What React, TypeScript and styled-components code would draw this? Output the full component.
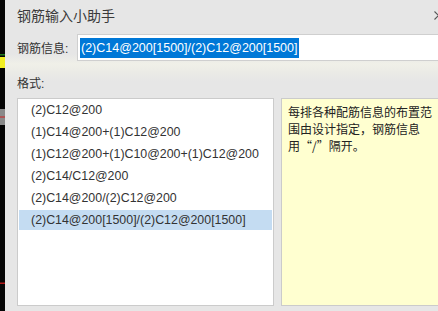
import React from "react";
import styled, { createGlobalStyle } from "styled-components";

const formats = [
  "(2)C12@200",
  "(1)C14@200+(1)C12@200",
  "(1)C12@200+(1)C10@200+(1)C12@200",
  "(2)C14/C12@200",
  "(2)C14@200/(2)C12@200",
  "(2)C14@200[1500]/(2)C12@200[1500]",
];

const GlobalStyle = createGlobalStyle`
  html, body {
    margin: 0;
    padding: 0;
    width: 438px;
    height: 311px;
    overflow: hidden;
    background: #000;
  }
  body {
    font-family: "Liberation Sans", "Noto Sans CJK SC", sans-serif;
  }
`;

const Screen = styled.div`
  display: flex;
  width: 438px;
  height: 311px;
  overflow: hidden;
`;

const Canvas = styled.div`
  flex: 0 0 5px;
  height: 311px;
  background: #050505;
  svg {
    display: block;
  }
`;

const Dialog = styled.div`
  flex: 0 0 450px;
  height: 311px;
  box-sizing: border-box;
  padding: 0 0 5px 12px;
  display: flex;
  flex-direction: column;
  background: linear-gradient(
    180deg,
    #e6e6e6 0px,
    #e6e6e6 54px,
    #f0f0e8 64px,
    #ebebe6 72px,
    #e6e6e6 82px,
    #e6e6e6 100%
  );
  color: #333;
`;

const TitleBar = styled.div`
  height: 30px;
  display: flex;
  align-items: center;
  justify-content: space-between;
  padding-right: 12px;
  font-size: 14px;
  color: #3a3a3a;
`;

const Close = styled.span`
  width: 9px;
  height: 9px;
  display: flex;
  svg {
    display: block;
  }
`;

const FieldRow = styled.div`
  margin-top: 4px;
  display: flex;
  align-items: center;
  height: 27px;
  font-size: 12px;
`;

const Label = styled.span`
  width: 60px;
  color: #333;
  font-size: 12px;
`;

const Input = styled.div`
  flex: 1;
  height: 27px;
  box-sizing: border-box;
  border: 1px solid #cfcfcf;
  background: #fff;
  display: flex;
  align-items: center;
  padding-left: 2px;
`;

const Selected = styled.span`
  background: #0078d7;
  color: #fff;
  font-size: 12.5px;
  line-height: 20px;
  padding: 0 1px;
`;

const Caption = styled.div`
  margin-top: 15px;
  height: 16px;
  line-height: 16px;
  font-size: 12px;
`;

const Panels = styled.div`
  margin-top: 6px;
  flex: 1;
  display: flex;
  gap: 7px;
  min-height: 0;
`;

const ListBox = styled.div`
  width: 257px;
  box-sizing: border-box;
  border: 1px solid #cbcbcb;
  background: #fff;
  padding: 1px 1px;
`;

const Item = styled.div<{ $active?: boolean }>`
  height: 20px;
  margin-bottom: 2px;
  line-height: 20px;
  padding-left: 12px;
  font-size: 12.4px;
  color: #333;
  background: ${(p) => (p.$active ? "#c4dcf2" : "transparent")};
`;

const Hint = styled.div`
  width: 168px;
  box-sizing: border-box;
  border: 1px solid #cbcbcb;
  background: #ffffd0;
  padding: 4px 12px 0 6px;
  font-family: "Noto Sans CJK SC", sans-serif;
  font-size: 12px;
  line-height: 17px;
  color: #222;
`;

export default function App() {
  return (
    <>
      <GlobalStyle />
      <Screen>
        <Canvas>
          <svg width="5" height="311">
            <rect x="0" y="54" width="5" height="1.5" fill="#1f7a1f" />
            <rect x="0" y="57" width="5" height="11" fill="#f2ee22" />
            <rect x="0" y="109" width="5" height="16" fill="#8a8a8a" />
            <rect x="0" y="116.5" width="5" height="1" fill="#d02020" />
            <rect x="0" y="282.5" width="5" height="1.5" fill="#b01818" />
          </svg>
        </Canvas>
        <Dialog>
          <TitleBar>
            <span>钢筋输入小助手</span>
            <Close>
              <svg width="9" height="9" viewBox="0 0 9 9">
                <path d="M0.5 0.5L8.5 8.5M8.5 0.5L0.5 8.5" stroke="#555" strokeWidth="1.1" />
              </svg>
            </Close>
          </TitleBar>
          <FieldRow>
            <Label>钢筋信息:</Label>
            <Input>
              <Selected>(2)C14@200[1500]/(2)C12@200[1500]</Selected>
            </Input>
          </FieldRow>
          <Caption>格式:</Caption>
          <Panels>
            <ListBox>
              {formats.map((f, i) => (
                <Item key={f} $active={i === formats.length - 1}>
                  {f}
                </Item>
              ))}
            </ListBox>
            <Hint>每排各种配筋信息的布置范围由设计指定，钢筋信息用“/”隔开。</Hint>
          </Panels>
        </Dialog>
      </Screen>
    </>
  );
}
